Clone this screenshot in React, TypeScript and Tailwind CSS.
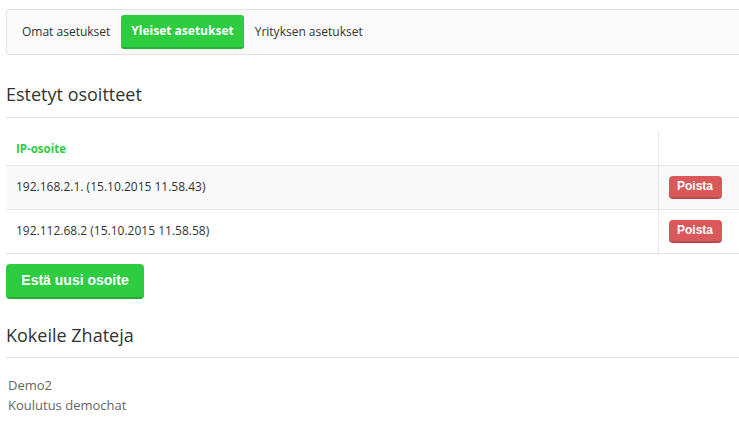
const tabs = ["Omat asetukset", "Yleiset asetukset", "Yrityksen asetukset"]

const blocked = [
  "192.168.2.1. (15.10.2015 11.58.43)",
  "192.112.68.2 (15.10.2015 11.58.58)",
]

export default function App() {
  return (
    <div className="min-h-[433px] bg-white pl-[6px] pt-[9px] text-[#333] font-['Open_Sans',sans-serif]">
      {/* Tabs */}
      <div className="flex h-[46px] items-center gap-px rounded-l-[3px] border border-r-0 border-[#e3e3e3] bg-[#fafafa] pl-[5px]">
        {tabs.map((t, i) => (
          <div
            key={t}
            className={
              i === 1
                ? "flex h-[34px] items-center rounded-[3px] border-b-2 border-[#27b335] bg-[#2ecc40] px-[10px] text-[12px] font-bold text-white"
                : "flex h-[34px] items-center px-[10px] text-[12px] text-[#333]"
            }
          >
            {t}
          </div>
        ))}
      </div>

      {/* Blocked addresses */}
      <h2 className="mt-[25px] border-b border-[#e5e5e5] pb-[9px] text-[18px] leading-[28px] font-normal">
        Estetyt osoitteet
      </h2>

      <table className="mt-[15px] w-full border-collapse text-[12px]">
        <thead>
          <tr className="h-[32px] border-b border-[#e5e5e5]">
            <th className="pl-[10px] text-left text-[11.5px] font-bold text-[#2ecc40]">IP-osoite</th>
            <th className="w-[81px] border-l border-[#e5e5e5]"></th>
          </tr>
        </thead>
        <tbody>
          {blocked.map((ip, i) => (
            <tr
              key={ip}
              className={i % 2 === 0 ? "h-[44px] border-b border-[#e5e5e5] bg-[#f9f9f9]" : "h-[44px] border-b border-[#e5e5e5]"}
            >
              <td className="pl-[10px]">{ip}</td>
              <td className="border-l border-[#e5e5e5] pl-[10px]">
                <button className="flex h-[23px] w-[53px] items-center justify-center rounded-[4px] border-b-2 border-[#b94a4c] bg-[#d9585a] font-['Liberation_Sans',Arial,sans-serif] text-[12px] font-bold text-white">
                  Poista
                </button>
              </td>
            </tr>
          ))}
        </tbody>
      </table>

      <button className="mt-[10px] flex h-[35px] w-[138px] items-center justify-center rounded-[4px] border-b-2 border-[#25ad32] bg-[#2ecc40] font-['Liberation_Sans',Arial,sans-serif] text-[14px] font-bold text-white">
        Estä uusi osoite
      </button>

      {/* Demos */}
      <h2 className="mt-[22px] border-b border-[#e5e5e5] pb-[8px] text-[18px] leading-[28px] font-normal">
        Kokeile Zhateja
      </h2>
      <div className="mt-[17px] pl-[2px] text-[13px] leading-[20px] text-[#666]">
        <div>Demo2</div>
        <div>Koulutus demochat</div>
      </div>
    </div>
  )
}
